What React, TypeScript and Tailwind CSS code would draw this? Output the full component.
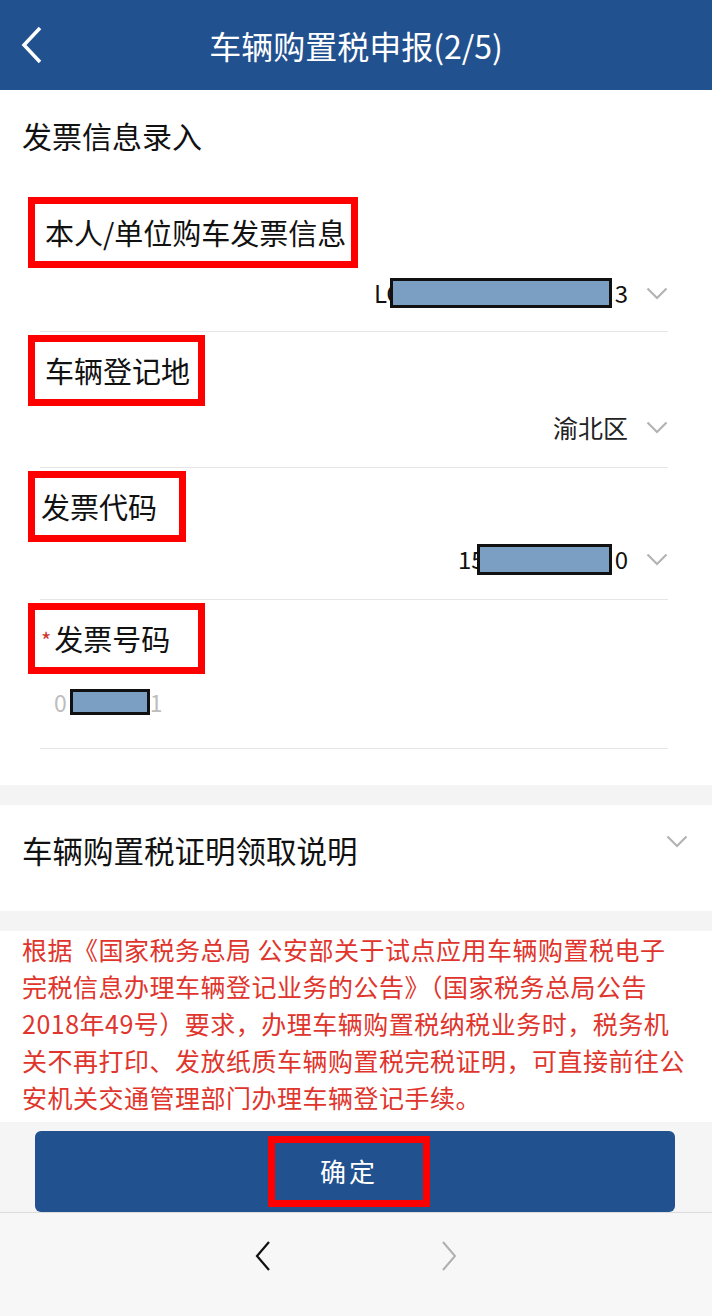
const FONT = { fontFamily: '"Noto Sans CJK SC", "Liberation Sans", sans-serif' }

function ChevronDown({ className = "" }: { className?: string }) {
  return (
    <svg width="22" height="13" viewBox="0 0 22 13" className={className}>
      <path d="M1.5 1.5 L11 11 L20.5 1.5" fill="none" stroke="#b3b3b3" strokeWidth="2.2" />
    </svg>
  )
}

function Mask({ w, h, className = "" }: { w: number; h: number; className?: string }) {
  return (
    <span
      className={"relative inline-block bg-[#7b9fc2] border-[3px] border-[#111] " + className}
      style={{ width: w, height: h }}
    />
  )
}

function Field({
  label,
  boxWidth,
  valueRow,
  rowHeight,
  required,
  labelPad = 10,
}: {
  label: string
  boxWidth: number
  valueRow: React.ReactNode
  rowHeight: number
  required?: boolean
  labelPad?: number
}) {
  return (
    <div className="pt-[3px]">
      <div
        className="ml-[28px] h-[71px] border-[7px] border-[#ff0000] bg-white flex items-center"
        style={{ width: boxWidth, paddingLeft: labelPad }}
      >
        {required && <span className="text-[#d0342c] text-[22px] mr-[3px] -ml-[4px] mt-[2px]">*</span>}
        <span className="text-[29px] text-[#111] leading-none whitespace-nowrap">{label}</span>
      </div>
      <div style={{ height: rowHeight }}>{valueRow}</div>
      <div className="ml-[40px] mr-[44px] h-px bg-[#e6e6e6]" />
    </div>
  )
}

export default function App() {
  return (
    <div className="w-[712px] h-[1316px] bg-white flex flex-col overflow-hidden" style={FONT}>
      {/* header */}
      <div className="h-[90px] bg-[#22518f] flex items-center relative shrink-0">
        <svg width="24" height="38" viewBox="0 0 24 38" className="absolute left-[20px] top-[26px]">
          <path d="M20 2 L4 19 L20 36" fill="none" stroke="#fff" strokeWidth="3.5" />
        </svg>
        <div className="w-full text-center text-white text-[32px] leading-none">车辆购置税申报(2/5)</div>
      </div>

      {/* invoice section */}
      <div className="bg-white">
        <div className="h-[90px] flex items-center pl-[22px] text-[30px] text-[#111]">发票信息录入</div>
        <div className="pt-[14px]">
          <Field
            label="本人/单位购车发票信息"
            boxWidth={330}
            rowHeight={63}
            valueRow={
              <div className="flex items-center justify-end pr-[44px] pt-[8px] h-[34px] box-content">
                <span className="text-[24px] text-[#111] leading-none">LC</span>
                <Mask w={222} h={30} className="-ml-[12px]" />
                <span className="text-[24px] text-[#111] leading-none ml-[3px]">3</span>
                <ChevronDown className="ml-[18px]" />
              </div>
            }
          />
          <Field
            label="车辆登记地"
            boxWidth={177}
            rowHeight={61}
            valueRow={
              <div className="flex items-center justify-end pr-[44px] pt-[4px] h-[34px] box-content">
                <span className="text-[25px] text-[#222] leading-none">渝北区</span>
                <ChevronDown className="ml-[18px]" />
              </div>
            }
          />
          <Field
            label="发票代码"
            boxWidth={158}
            labelPad={6}
            rowHeight={57}
            valueRow={
              <div className="flex items-center justify-end pr-[44px] pt-[0px] h-[34px] box-content">
                <span className="text-[24px] text-[#111] leading-none">15</span>
                <Mask w={135} h={31} className="-ml-[8px]" />
                <span className="text-[24px] text-[#111] leading-none ml-[3px]">0</span>
                <ChevronDown className="ml-[18px]" />
              </div>
            }
          />
          <Field
            label="发票号码"
            required
            boxWidth={177}
            rowHeight={74}
            valueRow={
              <div className="flex items-center pl-[54px] pt-[13px] h-[30px] box-content">
                <span className="text-[23px] text-[#bdbdbd] leading-none">0</span>
                <Mask w={80} h={26} className="ml-[3px]" />
                <span className="text-[23px] text-[#bdbdbd] leading-none">1</span>
              </div>
            }
          />
        </div>
        <div className="h-[36px]" />
      </div>

      <div className="h-[20px] bg-[#f4f4f4]" />

      {/* certificate section */}
      <div className="h-[107px] bg-white flex items-center pl-[22px] relative">
        <span className="text-[30.5px] text-[#111] leading-none mb-[16px]">车辆购置税证明领取说明</span>
        <ChevronDown className="absolute right-[24px] top-[30px]" />
      </div>

      <div className="h-[20px] bg-[#f4f4f4]" />

      <div className="bg-white pl-[22px] pr-[16px] pb-[6px] text-[#e0352c] text-[25px] leading-[37px] tracking-[0.5px]">
        <div className="whitespace-nowrap">根据《国家税务总局 公安部关于试点应用车辆购置税电子</div>
        <div className="whitespace-nowrap">完税信息办理车辆登记业务的公告》（国家税务总局公告</div>
        <div className="whitespace-nowrap">2018年49号）要求，办理车辆购置税纳税业务时，税务机</div>
        <div className="whitespace-nowrap">关不再打印、发放纸质车辆购置税完税证明，可直接前往公</div>
        <div className="whitespace-nowrap">安机关交通管理部门办理车辆登记手续。</div>
      </div>

      {/* button */}
      <div className="bg-[#f5f5f5] pt-[9px] pl-[35px] pr-[37px] flex-1 flex flex-col">
        <button className="h-[81px] w-full bg-[#22518f] rounded-[6px] flex items-center justify-center">
          <div className="w-[162px] h-[71px] mr-[12px] border-[7px] border-[#ff0000] flex items-center justify-center">
            <span className="text-white text-[26px] leading-none tracking-[3px]">确定</span>
          </div>
        </button>
      </div>

      {/* bottom nav */}
      <div className="h-[104px] shrink-0 bg-[#f7f7f7] border-t border-[#dcdcdc] flex items-start justify-center gap-[170px] pt-[28px]">
        <svg width="16" height="30" viewBox="0 0 16 30">
          <path d="M14 1 L2 15 L14 29" fill="none" stroke="#111" strokeWidth="2.2" />
        </svg>
        <svg width="16" height="30" viewBox="0 0 16 30">
          <path d="M2 1 L14 15 L2 29" fill="none" stroke="#b0b0b0" strokeWidth="2" />
        </svg>
      </div>
    </div>
  )
}
